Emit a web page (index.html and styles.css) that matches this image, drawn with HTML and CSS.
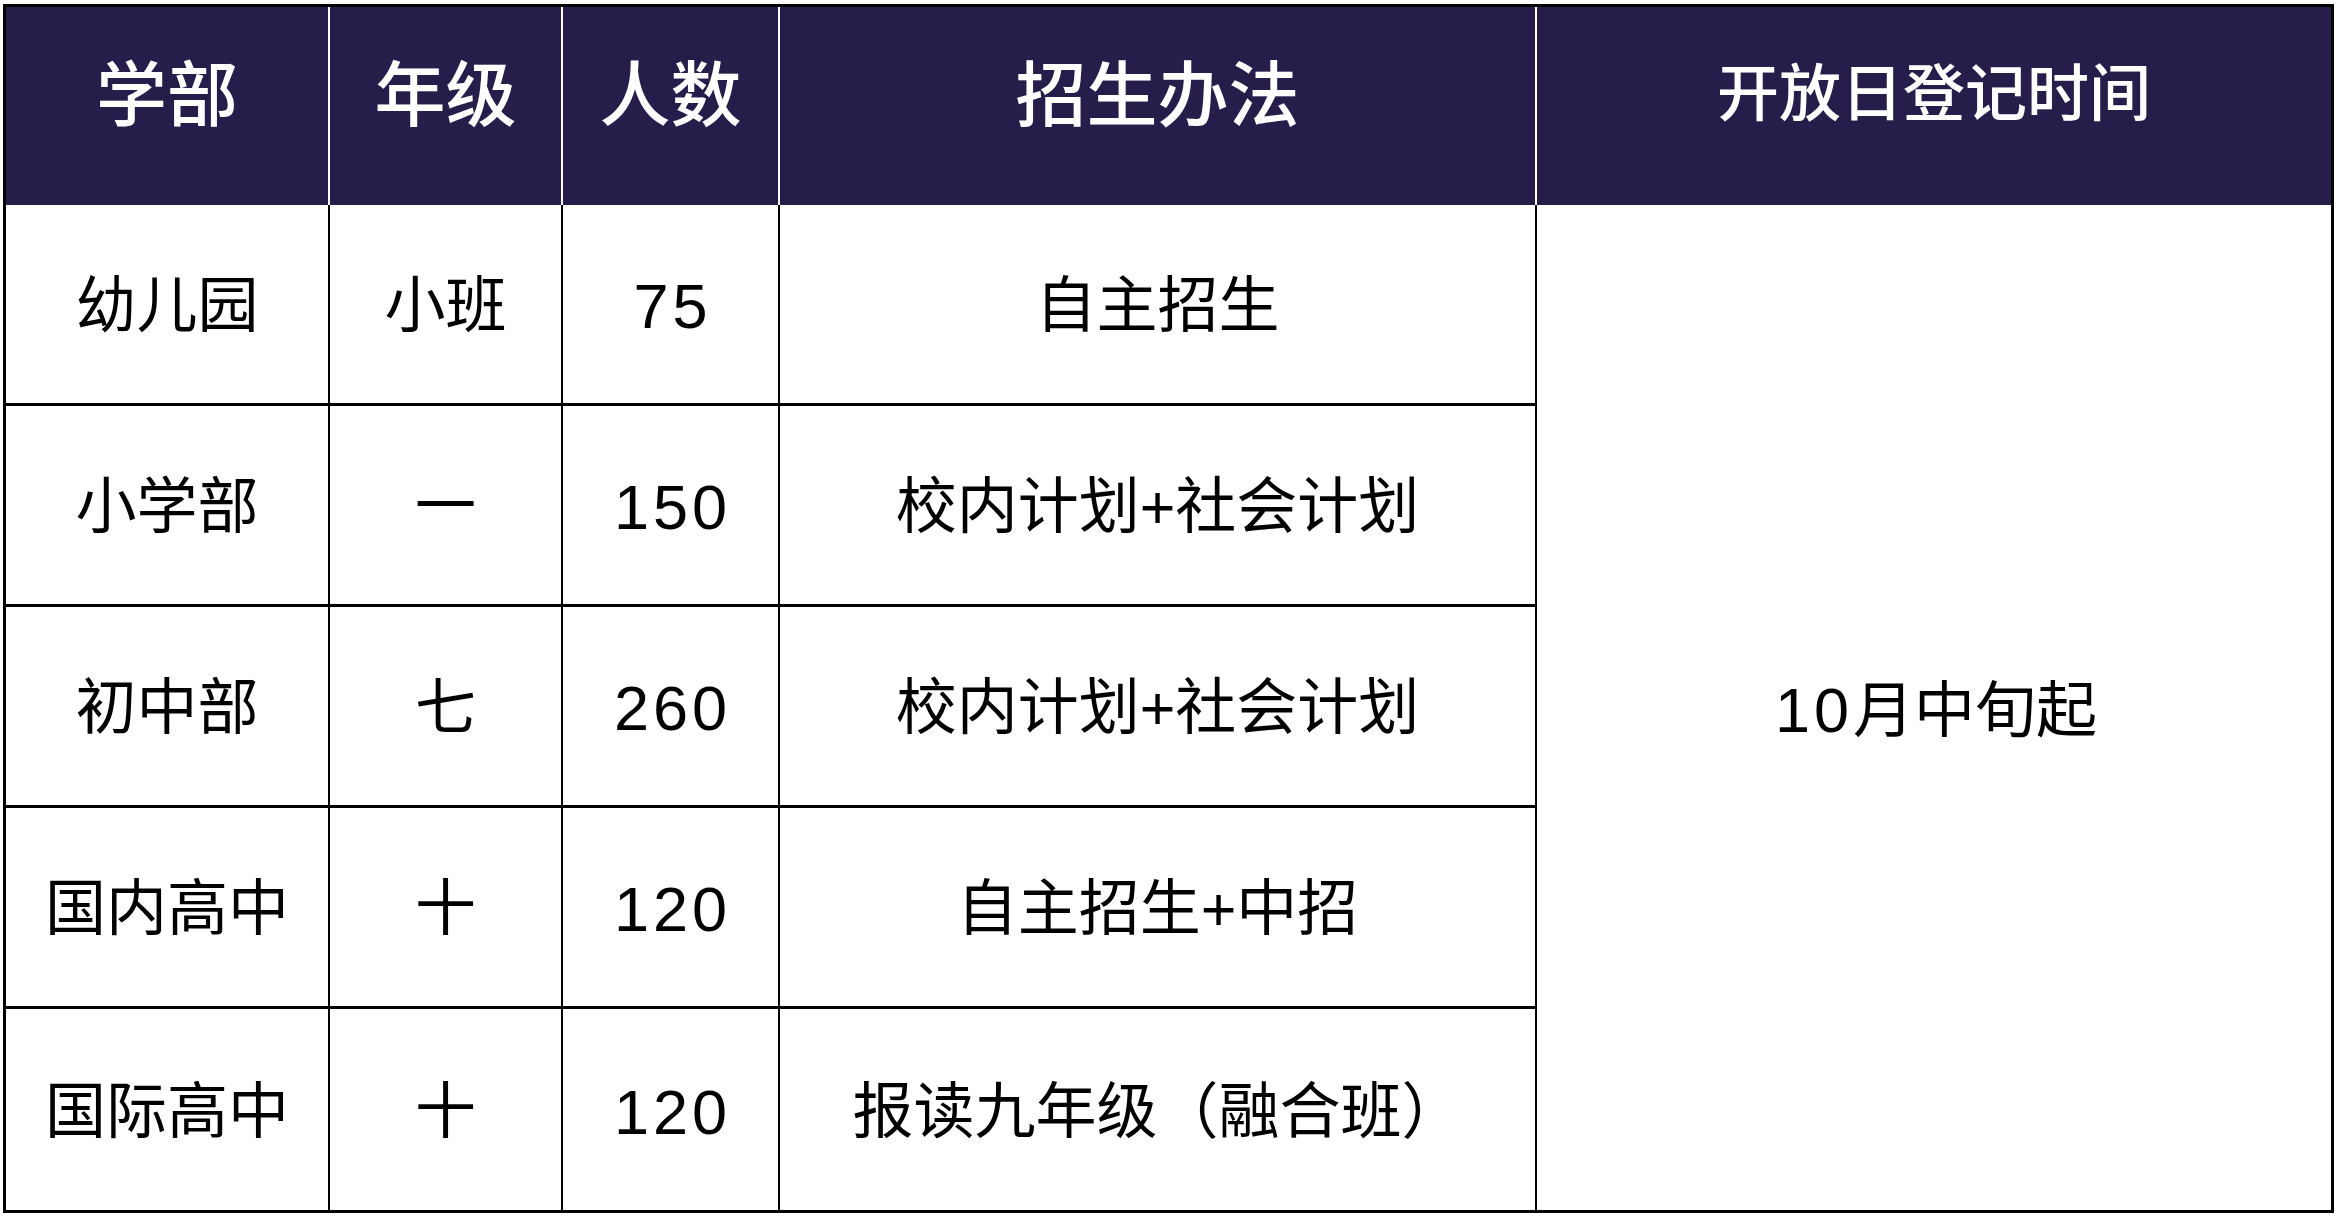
FILE: index.html
```html
<!DOCTYPE html>
<html lang="zh-CN">
<head>
<meta charset="utf-8">
<title>招生计划</title>
<link rel="stylesheet" href="styles.css">
</head>
<body>
<table class="plan">
  <colgroup>
    <col class="c1"><col class="c2"><col class="c3"><col class="c4"><col class="c5">
  </colgroup>
  <thead>
    <tr class="head-row">
      <th>学部</th>
      <th>年级</th>
      <th>人数</th>
      <th>招生办法</th>
      <th class="small">开放日登记时间</th>
    </tr>
  </thead>
  <tbody>
    <tr>
      <td>幼儿园</td>
      <td>小班</td>
      <td><span class="num">75</span></td>
      <td>自主招生</td>
      <td class="span" rowspan="5"><span class="num">10</span>月中旬起</td>
    </tr>
    <tr>
      <td>小学部</td>
      <td>一</td>
      <td><span class="num">150</span></td>
      <td>校内计划+社会计划</td>
    </tr>
    <tr>
      <td>初中部</td>
      <td>七</td>
      <td><span class="num">260</span></td>
      <td>校内计划+社会计划</td>
    </tr>
    <tr>
      <td>国内高中</td>
      <td>十</td>
      <td><span class="num">120</span></td>
      <td>自主招生+中招</td>
    </tr>
    <tr class="last">
      <td>国际高中</td>
      <td>十</td>
      <td><span class="num">120</span></td>
      <td>报读九年级（融合班）</td>
    </tr>
  </tbody>
</table>
</body>
</html>
```

FILE: styles.css
```css
html, body {
  background: #ffffff;
}
body {
  margin: 4px 0 0 3px;
  font-family: "Liberation Sans", "Noto Sans CJK SC", sans-serif;
}
.plan {
  border-collapse: separate;
  border-spacing: 0;
  border: 3px solid #000;
  width: 2331px;
  table-layout: fixed;
}
.c1 { width: 324px; }
.c2 { width: 233px; }
.c3 { width: 217px; }
.c4 { width: 757px; }
.c5 { width: 794px; }

.head-row {
  height: 198px;
}
.plan th {
  background: #271d4a;
  color: #ffffff;
  font-weight: 500;
  font-size: 71px;
  line-height: 1;
  padding: 0 0 22px 0;
  text-align: center;
  vertical-align: middle;
  border-right: 2px solid #ffffff;
  white-space: nowrap;
}
.plan th.small {
  font-size: 62px;
  border-right: none;
}
.plan tbody tr {
  height: 201px;
}
.plan td {
  color: #000;
  font-size: 61px;
  line-height: 1;
  padding: 5px 0 0 0;
  text-align: center;
  vertical-align: middle;
  border-right: 2px solid #000;
  border-bottom: 3px solid #000;
  white-space: nowrap;
}
.num {
  font-size: 63px;
  letter-spacing: 4px;
  padding-left: 4px;
}
.plan tr.last td {
  border-bottom: none;
}
.plan td.span {
  border-right: none;
  border-bottom: none;
}
```
